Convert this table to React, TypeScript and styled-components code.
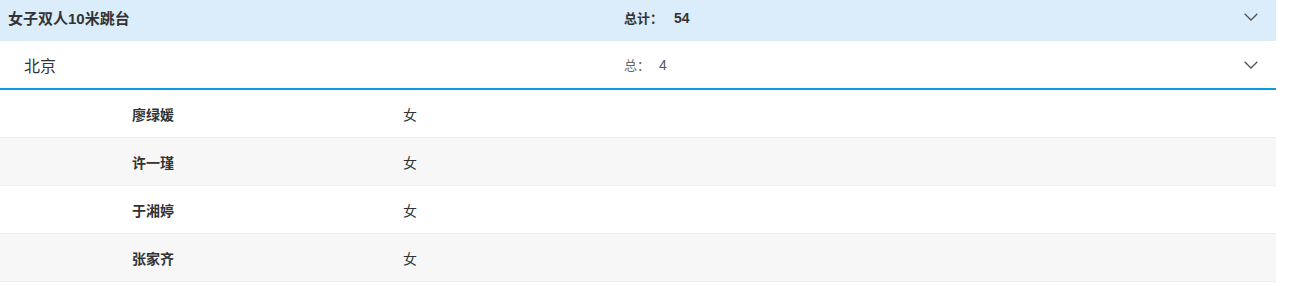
import React from "react";
import styled, { createGlobalStyle } from "styled-components";

const Global = createGlobalStyle`
  html, body { margin: 0; padding: 0; background: #fff; }
  body { font-family: "Liberation Sans", Arial, "Noto Sans CJK SC", sans-serif; color: #333; }
`;

const Wrap = styled.div`
  width: 1276px;
`;

const GroupHeader = styled.div`
  display: grid;
  grid-template-columns: 616px 1fr 40px;
  align-items: center;
  height: 34px;
  padding: 0 0 7px 8px;
  background: #dbecfb;
  font-weight: bold;
  color: #333;
`;

const Title = styled.span`
  font-size: 15px;
`;

const SubHeader = styled.div`
  display: grid;
  grid-template-columns: 600px 1fr 40px;
  align-items: center;
  height: 47px;
  padding-left: 24px;
  border-bottom: 2px solid #0a9be3;
  font-size: 16px;
  color: #333;
`;

const Total = styled.span<{ $muted?: boolean }>`
  font-size: 13px;
  color: ${(p) => (p.$muted ? "#666" : "#333")};
  & b { margin-left: 11px; font-size: 14px; }
  & em { font-style: normal; margin-left: 9px; font-size: 14px; color: #556; }
`;

const Chevron = styled.svg`
  width: 14px;
  height: 8px;
  justify-self: start;
  margin-left: 8px;
`;

const Row = styled.div<{ $alt?: boolean }>`
  display: grid;
  grid-template-columns: 271px 1fr;
  align-items: center;
  height: 47px;
  padding-left: 132px;
  background: ${(p) => (p.$alt ? "#f7f7f7" : "#fff")};
  border-bottom: 1px solid #ededf3;
  font-size: 14px;
  color: #333;
`;

const Name = styled.span`
  font-weight: bold;
`;

const Down = () => (
  <Chevron viewBox="0 0 14 8">
    <path d="M0.7 0.7 L7 7 L13.3 0.7" fill="none" stroke="#555" strokeWidth="1.3" />
  </Chevron>
);

const people = ["廖绿媛", "许一瑾", "于湘婷", "张家齐"];

export default function App() {
  return (
    <Wrap>
      <Global />
      <GroupHeader>
        <Title>女子双人10米跳台</Title>
        <Total>
          总计：<b>54</b>
        </Total>
        <Down />
      </GroupHeader>
      <SubHeader>
        <span>北京</span>
        <Total $muted>
          总：<em>4</em>
        </Total>
        <Down />
      </SubHeader>
      {people.map((n, i) => (
        <Row key={n} $alt={i % 2 === 1}>
          <Name>{n}</Name>
          <span>女</span>
        </Row>
      ))}
    </Wrap>
  );
}
